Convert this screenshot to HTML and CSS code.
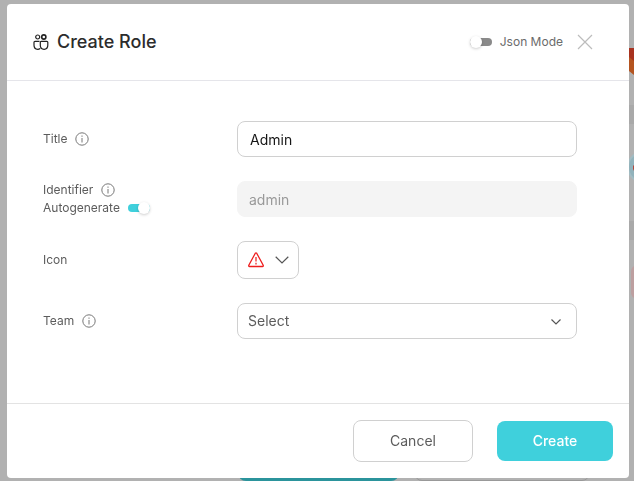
FILE: index.html
```html
<!DOCTYPE html>
<html lang="en">
<head>
<meta charset="utf-8">
<meta name="viewport" content="width=device-width, initial-scale=1">
<title>Create Role</title>
<link rel="stylesheet" href="styles.css">
</head>
<body>
<svg class="icon-defs" aria-hidden="true">
  <symbol id="info" viewBox="0 0 14 14">
    <circle cx="7" cy="7" r="6.2" fill="none" stroke="currentColor"/>
    <path d="M7 6v4.500M7 3.500v1.300" fill="none" stroke="currentColor"/>
  </symbol>
</svg>
<div class="backdrop" aria-hidden="true">
  <svg class="edge-art" viewBox="0 0 5 481">
    <path d="M0 48h5v27L0 71z" fill="#b45420"/>
    <path d="M0 48h5v13L0 57z" fill="#a83220"/>
    <path d="M0 105h5v19H0zM0 221h5v19H0z" fill="#a9a9a9"/>
    <circle cx="14" cy="167" r="15" fill="#91b2bb" stroke="#a2bbc2" stroke-width="2"/>
    <path d="M4 166l1-1v6l-1-2z" fill="#b0483f"/>
    <path d="M5 266q-3 2-3 6v20q0 4 3 6z" fill="#bd9fa0"/>
  </svg>
  <div class="page-action page-action-primary"></div>
  <div class="page-action page-action-outline"></div>
</div>
<form class="modal" role="dialog" aria-labelledby="modal-title">
  <header class="modal-header">
    <svg class="role-icon" viewBox="0 0 16 16" fill="none" stroke="#222" stroke-width="1.200" aria-hidden="true">
      <circle cx="4.700" cy="3" r="2"/>
      <circle cx="10.800" cy="3" r="2.100" stroke-width="1.600"/>
      <path d="M7.200 14.300C6.500 15 5.700 15.300 4.700 15.300C2.500 15.300 1 13.600 1 11.300V8.300Q1 7.300 2 7.300H6.500"/>
      <path d="M8.200 7.300H13.800Q14.800 7.300 14.800 8.300V11.300C14.800 13.600 13.300 15.300 11.100 15.300S7.300 13.600 7.300 11.300V8.300Q7.300 7.300 8.200 7.300Z"/>
    </svg>
    <h1 class="modal-title" id="modal-title">Create Role</h1>
    <label class="json-mode"><input class="switch" type="checkbox" role="switch">Json Mode</label>
    <button class="close" type="button" aria-label="Close">
      <svg viewBox="0 0 16 16" fill="none" stroke="#bcbcbc" stroke-width="1.200"><path d="M1 1l14 14M15 1L1 15"/></svg>
    </button>
  </header>
  <div class="modal-body">
    <div class="field">
      <div class="field-label"><label for="title">Title</label><svg class="info"><use href="#info"/></svg></div>
      <input class="control" id="title" type="text" value="Admin">
    </div>
    <div class="field">
      <div class="label-stack">
        <div class="field-label"><label for="identifier">Identifier</label><svg class="info"><use href="#info"/></svg></div>
        <label class="field-label">Autogenerate<input class="switch" type="checkbox" role="switch" checked></label>
      </div>
      <input class="control" id="identifier" type="text" value="admin" disabled>
    </div>
    <div class="field">
      <label class="field-label" for="icon">Icon</label>
      <button class="icon-picker" id="icon" type="button">
        <svg class="alert" viewBox="0 0 16 16" fill="none" stroke="#ee1c1c" stroke-width="1.300" stroke-linejoin="round" aria-hidden="true">
          <path d="M7.300 1.300Q8 .5 8.700 1.300L15.200 13.300Q15.600 14.500 14.500 14.500H1.500Q.4 14.500 .8 13.300Z"/>
          <path d="M8 5v4.500M8 10.800v1.600" stroke-width="1.200"/>
        </svg>
        <svg class="chevron" viewBox="0 0 14 8" fill="none" stroke="#555" stroke-width="1.200" aria-hidden="true"><path d="M.7 .8L7 7L13.300 .8"/></svg>
      </button>
    </div>
    <div class="field">
      <div class="field-label"><label for="team">Team</label><svg class="info"><use href="#info"/></svg></div>
      <div class="select-wrap">
        <select class="control" id="team"><option>Select</option></select>
        <svg class="select-arrow" viewBox="0 0 10 6" fill="none" stroke="#555" stroke-width="1.200" aria-hidden="true"><path d="M.5 .5L5 5L9.500 .5"/></svg>
      </div>
    </div>
  </div>
  <footer class="modal-footer">
    <button class="button button-cancel" type="button">Cancel</button>
    <button class="button button-create" type="submit">Create</button>
  </footer>
</form>
</body>
</html>
```
FILE: styles.css
```css
* { box-sizing: border-box; }

body {
  margin: 0;
  min-height: 100vh;
  padding: 4px 5px 3px 7px;
  display: flex;
  background: #b1b1b1;
  color: #5c5c5c;
  font: 12px/18px Inter, "Liberation Sans", sans-serif;
}

button, input, select { font: inherit; color: inherit; margin: 0; }
svg { display: block; flex: none; }
.icon-defs { position: absolute; width: 0; height: 0; }

/* Dimmed page showing round the dialog */
.backdrop { position: fixed; inset: 0; overflow: hidden; }
.edge-art { position: absolute; top: 0; right: 0; width: 5px; height: 481px; }
.page-action { position: absolute; bottom: 0; height: 40px; border-radius: 8px; }
.page-action-primary { left: 238px; width: 161px; background: #2b949c; }
.page-action-outline { left: 414px; width: 176px; border: 1px solid #999; }

.modal {
  position: relative;
  flex: 1;
  display: flex;
  flex-direction: column;
  background: #fff;
  border-radius: 4px;
}

.modal-header {
  display: flex;
  align-items: center;
  padding: 24px 36px 24px 26px;
  border-bottom: 1px solid #e5e5ea;
}
.role-icon { width: 16px; height: 16px; margin-right: 8px; }
.modal-title {
  flex: 1;
  margin: 0;
  font-size: 18px;
  line-height: 28px;
  font-weight: 500;
  color: #2c2c2c;
}
.json-mode { display: flex; align-items: center; gap: 8px; color: #6b6b6b; }
.close {
  width: 16px;
  height: 16px;
  margin-left: 14px;
  padding: 0;
  border: 0;
  background: none;
}

.switch {
  appearance: none;
  display: flex;
  align-items: center;
  width: 22px;
  height: 8px;
  border-radius: 4px;
  background: #8a8a8a;
}
.switch::before {
  content: "";
  flex: none;
  width: 12px;
  height: 12px;
  border-radius: 50%;
  background: #fff;
  box-shadow: 0 1px 3px rgba(0, 0, 0, .2);
}
.switch:checked { justify-content: flex-end; background: #3fd0dc; }

.modal-body {
  flex: 1;
  display: flex;
  flex-direction: column;
  gap: 24px;
  padding: 40px 52px 40px 36px;
}
.field {
  display: grid;
  grid-template-columns: 194px 1fr;
  align-items: center;
}
.field-label { display: flex; align-items: center; gap: 8px; }
.info { width: 14px; height: 14px; color: #777; }

.control {
  width: 100%;
  height: 36px;
  padding: 0 12px;
  border: 1px solid #d0d0d0;
  border-radius: 8px;
  background: #fff;
  color: #161616;
  font-size: 14px;
}
.control:disabled { padding: 0 11px; background: #f4f4f4; border-color: #f4f4f4; color: #999; }

.icon-picker {
  display: flex;
  align-items: center;
  justify-self: start;
  gap: 11px;
  height: 38px;
  padding: 0 9px 0 10px;
  border: 1px solid #d0d0d0;
  border-radius: 8px;
  background: #fff;
}
.alert { width: 16px; height: 16px; }
.chevron { width: 14px; height: 8px; }

.select-wrap { position: relative; }
select.control { display: block; appearance: none; padding: 0 10px; color: #5c5c5c; }
.select-arrow {
  position: absolute;
  top: 16px;
  right: 16px;
  width: 10px;
  height: 6px;
  pointer-events: none;
}

.modal-footer {
  display: flex;
  align-items: center;
  justify-content: flex-end;
  gap: 24px;
  padding: 16px;
  border-top: 1px solid #e3e3e3;
}
.button { border-radius: 8px; font-size: 14px; }
.button-cancel { width: 120px; height: 42px; border: 1px solid #d0d0d0; background: #fff; }
.button-create { width: 116px; height: 40px; border: 0; background: #3fd0dc; color: #fff; font-weight: 500; }
```
